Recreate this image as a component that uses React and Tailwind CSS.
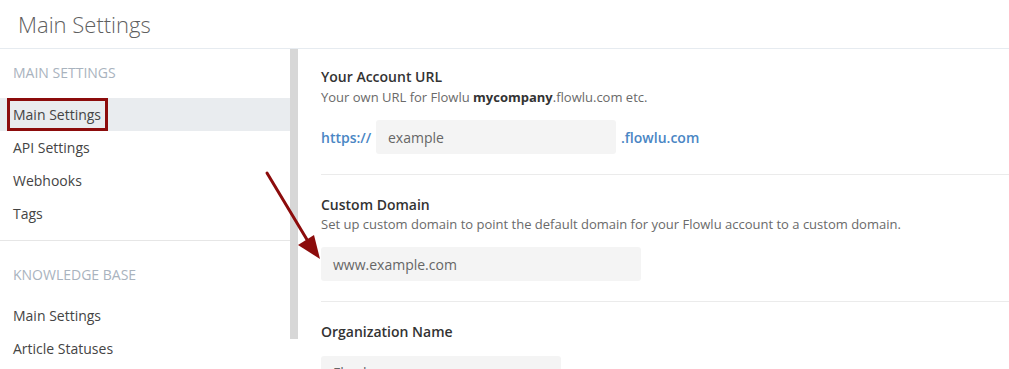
import React from 'react';

const sidebar = [
  {
    title: 'Main Settings',
    items: ['Main Settings', 'API Settings', 'Webhooks', 'Tags'],
  },
  {
    title: 'Knowledge Base',
    items: ['Main Settings', 'Article Statuses'],
  },
];

const App = () => {
  return (
    <div className="relative h-[369px] w-[1009px] overflow-hidden bg-white font-['Open_Sans',sans-serif]">
      {/* Header */}
      <div className="flex h-[49px] items-center border-b border-[#e6ebf0] pl-[18px]">
        <h1 className="text-[22px] font-light leading-none text-[#5f5f5f]">Main Settings</h1>
      </div>

      <div className="flex">
        {/* Sidebar */}
        <div className="w-[290px] shrink-0">
          <div className="pb-[10px]">
            <div className="px-[13px] pt-[14px] pb-[15px] text-[14px] uppercase leading-[20px] text-[#a9b3be]">
              {sidebar[0].title}
            </div>
            {sidebar[0].items.map((item, i) => (
              <div
                key={item}
                className={`relative flex h-[33px] items-center px-[13px] text-[14px] text-[#444] ${i === 0 ? 'bg-[#e9ecef]' : ''}`}
              >
                {item}
                {i === 0 && <div className="absolute left-[7px] top-0 h-[33px] w-[101px] border-[3px] border-[#8c0c0c]" />}
              </div>
            ))}
          </div>
          <div className="border-t border-[#e6e6e6]">
            <div className="px-[13px] pt-[24px] pb-[14px] text-[14px] uppercase leading-[20px] text-[#a9b3be]">
              {sidebar[1].title}
            </div>
            {sidebar[1].items.map((item) => (
              <div key={item} className="flex h-[33px] items-center px-[13px] text-[14px] text-[#444]">
                {item}
              </div>
            ))}
          </div>
        </div>

        {/* Scrollbar */}
        <div className="h-[290px] w-[8px] shrink-0 bg-[#d7d7d7]" />

        {/* Content */}
        <div className="flex-1 pl-[23px]">
          <div className="border-b border-[#ebebeb] pt-[18px] pb-[20px]">
            <div className="text-[14px] font-semibold leading-[20px] text-[#333]">Your Account URL</div>
            <div className="text-[13px] leading-[20px] text-[#6a6a6a]">
              Your own URL for Flowlu <span className="font-bold text-[#333]">mycompany</span>.flowlu.com etc.
            </div>
            <div className="mt-[13px] flex items-center">
              <span className="w-[55px] text-[14px] font-semibold text-[#4a86c4]">https://</span>
              <div className="flex h-[34px] w-[240px] items-center rounded-[3px] bg-[#f4f4f4] px-[12px] text-[14px] text-[#666]">
                example
              </div>
              <span className="ml-[5px] text-[14px] font-semibold text-[#4a86c4]">.flowlu.com</span>
            </div>
          </div>

          <div className="border-b border-[#ebebeb] pt-[20px] pb-[20px]">
            <div className="text-[14px] font-semibold leading-[20px] text-[#333]">Custom Domain</div>
            <div className="text-[13px] leading-[18px] text-[#6a6a6a]">
              Set up custom domain to point the default domain for your Flowlu account to a custom domain.
            </div>
            <div className="mt-[14px] flex h-[34px] w-[320px] items-center rounded-[3px] bg-[#f4f4f4] px-[12px] text-[14px] text-[#666]">
              www.example.com
            </div>
          </div>

          <div className="pt-[20px]">
            <div className="text-[14px] font-semibold leading-[20px] text-[#333]">Organization Name</div>
            <div className="mt-[14px] flex h-[34px] w-[240px] items-start rounded-[3px] bg-[#f4f4f4] px-[12px] pt-[6px] text-[14px] text-[#666]">
              Flowlu
            </div>
          </div>
        </div>
      </div>

      {/* Annotation arrow */}
      <svg className="absolute left-0 top-0" width="1009" height="369" viewBox="0 0 1009 369">
        <line x1="267" y1="173" x2="309" y2="243" stroke="#8c0c0c" strokeWidth="3" strokeLinecap="round" />
        <polygon points="320,259 298,245 314,235" fill="#8c0c0c" />
      </svg>
    </div>
  );
};

export default App;
